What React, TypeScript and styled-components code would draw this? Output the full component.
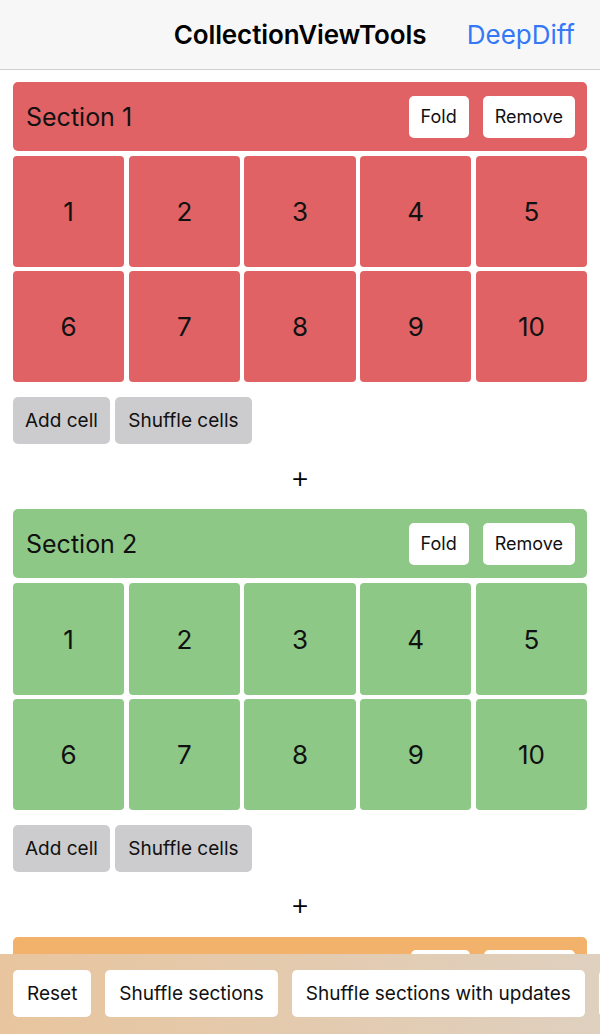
import React from 'react'
import styled, { createGlobalStyle } from 'styled-components'

const GlobalStyle = createGlobalStyle`
  html, body {
    margin: 0;
    padding: 0;
    background: #ffffff;
    font-family: Inter, "Noto Sans", sans-serif;
    color: #111111;
  }
  * { box-sizing: border-box; }
`

const Screen = styled.div`
  position: relative;
  height: 100vh;
  display: flex;
  flex-direction: column;
  overflow: hidden;
`

const NavBar = styled.header`
  flex: none;
  height: 70px;
  display: grid;
  grid-template-columns: 1fr auto 1fr;
  align-items: center;
  background: #f7f7f8;
  border-bottom: 1px solid #d0d0d3;
`

const NavTitle = styled.div`
  grid-column: 2;
  font-size: 26px;
  font-weight: 600;
  letter-spacing: -0.1px;
  color: #000;
`

const NavLink = styled.div`
  grid-column: 3;
  justify-self: end;
  padding-right: 25px;
  font-size: 26px;
  color: #3478f6;
`

const Content = styled.main`
  flex: 1;
  overflow: hidden;
  padding: 12px 13px 0;
`

const SectionHeader = styled.div<{ $color: string }>`
  height: 69px;
  border-radius: 5px;
  background: ${p => p.$color};
  display: flex;
  align-items: center;
  padding: 0 12px 0 13px;
  gap: 14px;
`

const SectionTitle = styled.div`
  flex: 1;
  font-size: 25px;
`

const HeaderButton = styled.button<{ $width?: number }>`
  height: 42px;
  min-width: ${p => (p.$width ? `${p.$width}px` : 'auto')};
  padding: 0 12px;
  border: none;
  border-radius: 5px;
  background: #ffffff;
  font-family: inherit;
  font-size: 18px;
  color: #111;
`

const CellGrid = styled.div`
  margin-top: 5px;
  display: grid;
  grid-template-columns: repeat(5, 1fr);
  gap: 4px 4.5px;
`

const Cell = styled.div<{ $color: string }>`
  aspect-ratio: 1 / 1;
  border-radius: 4px;
  background: ${p => p.$color};
  display: flex;
  align-items: center;
  justify-content: center;
  font-size: 26px;
  color: #111;
`

const CellActions = styled.div`
  margin-top: 15px;
  display: flex;
  gap: 5px;
`

const GrayButton = styled.button`
  height: 47px;
  padding: 0 12px;
  border: none;
  border-radius: 5px;
  background: #cccbce;
  font-family: inherit;
  font-size: 19px;
  color: #111;

  & + & {
    padding: 0 13.5px;
  }
`

const AddSection = styled.div`
  height: 65px;
  display: flex;
  align-items: center;
  justify-content: center;
  font-size: 30px;
  font-weight: 300;
  color: #000;
`

const Toolbar = styled.footer`
  position: absolute;
  left: 0;
  right: 0;
  bottom: 0;
  height: 80px;
  padding: 16px 13px 0;
  display: flex;
  gap: 14px;
  overflow: hidden;
  background: linear-gradient(90deg, #e8c59e, #dfd0bf);
`

const ToolbarButton = styled.button`
  flex: none;
  height: 47px;
  padding: 0 14px;
  border: none;
  border-radius: 5px;
  background: #ffffff;
  font-family: inherit;
  font-size: 19px;
  color: #111;
  white-space: nowrap;
`

type SectionData = { title: string; color: string }

const sections: SectionData[] = [
  { title: 'Section 1', color: '#e06264' },
  { title: 'Section 2', color: '#8dc886' },
]

function Section({ title, color }: SectionData) {
  return (
    <section>
      <SectionHeader $color={color}>
        <SectionTitle>{title}</SectionTitle>
        <HeaderButton>Fold</HeaderButton>
        <HeaderButton>Remove</HeaderButton>
      </SectionHeader>
      <CellGrid>
        {Array.from({ length: 10 }, (_, i) => (
          <Cell key={i} $color={color}>{i + 1}</Cell>
        ))}
      </CellGrid>
      <CellActions>
        <GrayButton>Add cell</GrayButton>
        <GrayButton>Shuffle cells</GrayButton>
      </CellActions>
      <AddSection>+</AddSection>
    </section>
  )
}

// third section only peeks out above the toolbar, its labels are hidden
function PeekSection({ color }: { color: string }) {
  return (
    <section>
      <SectionHeader $color={color}>
        <SectionTitle />
        <HeaderButton $width={59} aria-label="Fold" />
        <HeaderButton $width={91} aria-label="Remove" />
      </SectionHeader>
    </section>
  )
}

export default function App() {
  return (
    <>
      <GlobalStyle />
      <Screen>
        <NavBar>
          <NavTitle>CollectionViewTools</NavTitle>
          <NavLink>DeepDiff</NavLink>
        </NavBar>
        <Content>
          {sections.map(s => (
            <Section key={s.title} {...s} />
          ))}
          <PeekSection color="#f2b26c" />
        </Content>
        <Toolbar>
          <ToolbarButton>Reset</ToolbarButton>
          <ToolbarButton>Shuffle sections</ToolbarButton>
          <ToolbarButton>Shuffle sections with updates</ToolbarButton>
          <ToolbarButton aria-label="Add section" />
        </Toolbar>
      </Screen>
    </>
  )
}
